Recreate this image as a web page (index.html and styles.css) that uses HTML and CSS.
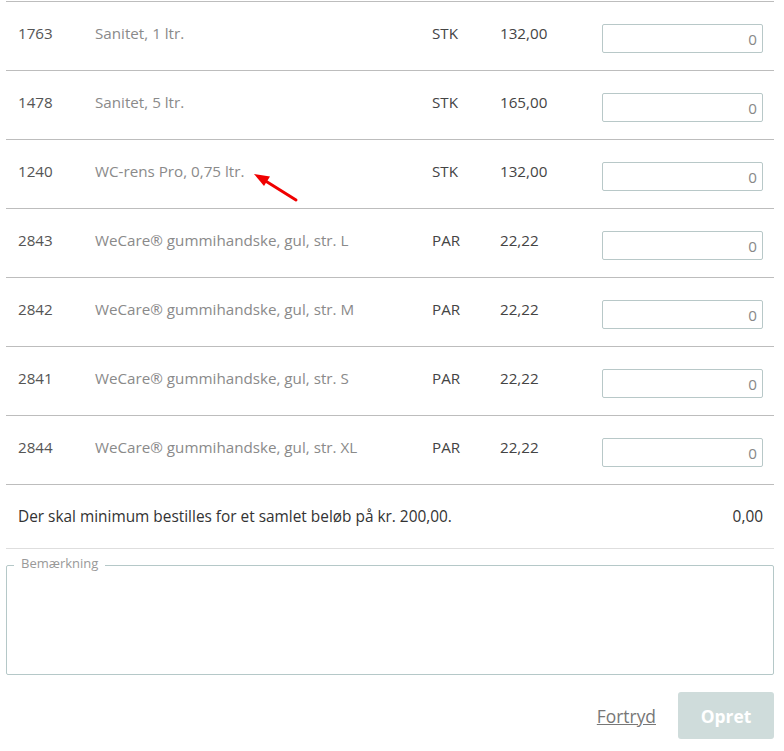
FILE: index.html
```html
<!DOCTYPE html>
<html lang="da">
<head>
<meta charset="utf-8">
<title>Bestilling</title>
<link rel="stylesheet" href="styles.css">
</head>
<body>
<div class="page">
  <div class="list">
    <div class="row">
      <div class="c code">1763</div>
      <div class="c desc">Sanitet, 1 ltr.</div>
      <div class="c unit">STK</div>
      <div class="c price">132,00</div>
      <div class="c qty"><input class="qty-input" type="text" value="0"></div>
    </div>
    <div class="row">
      <div class="c code">1478</div>
      <div class="c desc">Sanitet, 5 ltr.</div>
      <div class="c unit">STK</div>
      <div class="c price">165,00</div>
      <div class="c qty"><input class="qty-input" type="text" value="0"></div>
    </div>
    <div class="row">
      <div class="c code">1240</div>
      <div class="c desc">WC-rens Pro, 0,75 ltr.</div>
      <div class="c unit">STK</div>
      <div class="c price">132,00</div>
      <div class="c qty"><input class="qty-input" type="text" value="0"></div>
    </div>
    <div class="row">
      <div class="c code">2843</div>
      <div class="c desc">WeCare® gummihandske, gul, str. L</div>
      <div class="c unit">PAR</div>
      <div class="c price">22,22</div>
      <div class="c qty"><input class="qty-input" type="text" value="0"></div>
    </div>
    <div class="row">
      <div class="c code">2842</div>
      <div class="c desc">WeCare® gummihandske, gul, str. M</div>
      <div class="c unit">PAR</div>
      <div class="c price">22,22</div>
      <div class="c qty"><input class="qty-input" type="text" value="0"></div>
    </div>
    <div class="row">
      <div class="c code">2841</div>
      <div class="c desc">WeCare® gummihandske, gul, str. S</div>
      <div class="c unit">PAR</div>
      <div class="c price">22,22</div>
      <div class="c qty"><input class="qty-input" type="text" value="0"></div>
    </div>
    <div class="row">
      <div class="c code">2844</div>
      <div class="c desc">WeCare® gummihandske, gul, str. XL</div>
      <div class="c unit">PAR</div>
      <div class="c price">22,22</div>
      <div class="c qty"><input class="qty-input" type="text" value="0"></div>
    </div>
    <div class="total">
      <div>Der skal minimum bestilles for et samlet beløb på kr. 200,00.</div>
      <div>0,00</div>
    </div>
  </div>

  <fieldset class="note">
    <legend>Bemærkning</legend>
    <textarea class="note-text"></textarea>
  </fieldset>

  <div class="actions">
    <a class="cancel" href="#">Fortryd</a>
    <button class="submit" type="button">Opret</button>
  </div>

  <svg class="arrow" width="784" height="751" viewBox="0 0 784 751">
    <line x1="296" y1="200" x2="264" y2="180" stroke="#f00000" stroke-width="3" stroke-linecap="round"/>
    <polygon points="254,174 270,176.5 264,186" fill="#f00000"/>
  </svg>
</div>
</body>
</html>
```

FILE: styles.css
```css
html, body {
  margin: 0;
  padding: 0;
  background: #fff;
}

body {
  font-family: "Open Sans", "Liberation Sans", sans-serif;
  font-size: 15.2px;
  line-height: 20px;
  color: #444;
}

.page {
  position: relative;
  width: 768px;
  margin: 0 10px 0 6px;
  padding-top: 1px;
}

.list {
  border-top: 1px solid #bdbdbd;
}

.row {
  display: grid;
  grid-template-columns: 77px 337px 68px 102px 1fr;
  align-items: start;
  padding: 22px 0 17px;
  border-bottom: 1px solid #bdbdbd;
}

.c {
  padding-left: 12px;
  line-height: 18px;
}

.code {
  color: #555;
}

.desc {
  color: #8a8a8a;
}

.unit,
.price {
  color: #444;
}

.qty {
  padding-right: 11px;
}

.qty-input {
  display: block;
  box-sizing: border-box;
  width: 161px;
  height: 29px;
  margin: 0;
  padding: 0 5px;
  border: 1px solid #b8c8c8;
  border-radius: 2px;
  font-family: inherit;
  font-size: 15.2px;
  color: #888;
  text-align: right;
  background: #fff;
  outline: none;
}

.total {
  display: flex;
  justify-content: space-between;
  padding: 23px 11px 22px 12px;
  line-height: 18px;
  font-size: 15.4px;
  border-bottom: 1px solid #dedede;
  color: #333;
}

.note {
  margin: 5px 0 0;
  padding: 0 7px;
  border: 1px solid #b5c8c8;
  border-radius: 2px;
  min-width: 0;
}

.note legend {
  padding: 0 7px 4px;
  font-size: 13px;
  line-height: 18px;
  color: #999;
}

.note-text {
  display: block;
  box-sizing: border-box;
  width: 100%;
  height: 98px;
  margin: 0;
  border: 0;
  resize: none;
  outline: none;
  background: transparent;
  font-family: inherit;
}

.actions {
  display: flex;
  justify-content: flex-end;
  align-items: center;
  gap: 22px;
  margin-top: 17px;
}

.cancel {
  font-size: 17.4px;
  color: #777;
  text-decoration: underline;
}

.submit {
  width: 96px;
  height: 47px;
  border: 0;
  border-radius: 3px;
  background: #cfdcdb;
  color: #fff;
  font-family: inherit;
  font-size: 17.4px;
  font-weight: 700;
}

.arrow {
  position: absolute;
  left: -6px;
  top: 0;
  pointer-events: none;
}
```
